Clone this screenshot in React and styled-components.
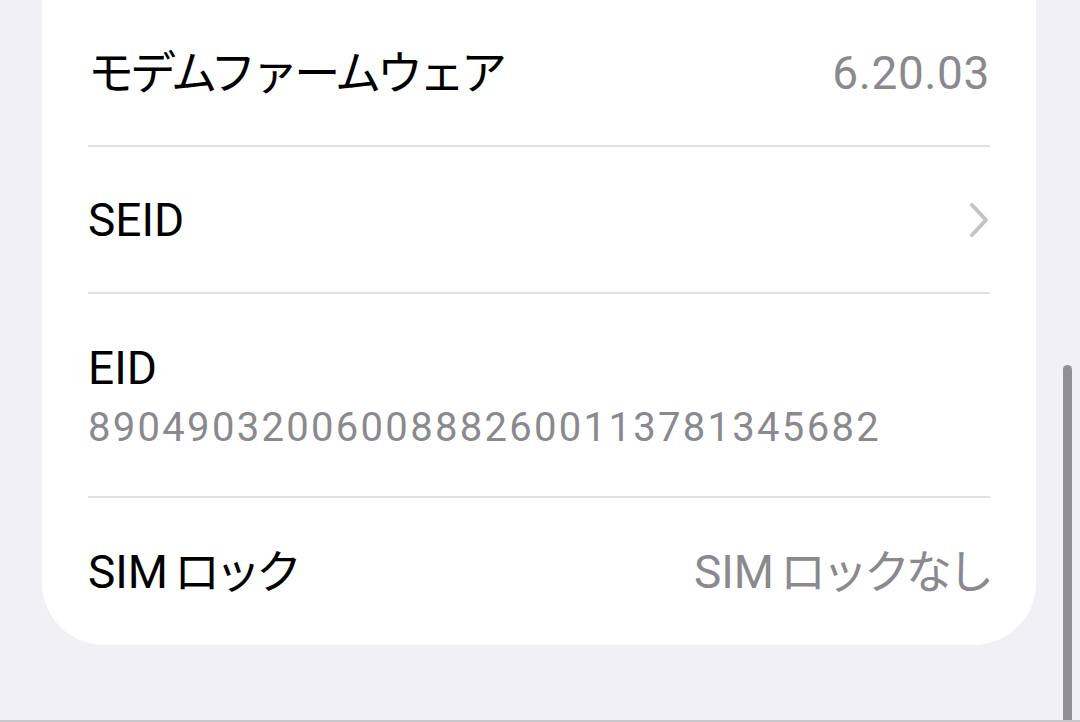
import styled, { createGlobalStyle } from 'styled-components'

const GlobalStyle = createGlobalStyle`
  html, body {
    margin: 0;
    padding: 0;
    background: #f0f0f5;
  }
  body {
    font-family: Roboto, "Noto Sans CJK JP", sans-serif;
    -webkit-font-smoothing: antialiased;
  }
`

const Screen = styled.div`
  position: relative;
  box-sizing: border-box;
  height: 722px;
  overflow: hidden;
  padding: 0 44px 0 42px;
  background: #f0f0f5;
  border-bottom: 2px solid #c8c8cb;
`

const Card = styled.div`
  background: #fff;
  border-radius: 0 0 62px 62px;
  padding: 0 46px;
`

const Row = styled.div`
  display: flex;
  align-items: center;
  justify-content: space-between;
  height: ${(p) => p.$h}px;
`

const Stack = styled.div`
  display: flex;
  flex-direction: column;
  justify-content: flex-start;
  height: ${(p) => p.$h}px;
  padding-top: 47px;
  box-sizing: border-box;
`

const Label = styled.span`
  font-size: 46px;
  line-height: 54px;
  color: #000;
  white-space: nowrap;
`

const Value = styled.span`
  font-size: 46px;
  line-height: 54px;
  color: #8a8a8e;
  white-space: nowrap;
  letter-spacing: ${(p) => (p.$digits ? '0.6px' : '0')};
`

const Kana = styled.span`
  letter-spacing: ${(p) => (p.$tight ? '-5px' : '-4px')};
  margin-left: ${(p) => (p.$gap ? '6px' : '0')};
`

const Number = styled.div`
  margin-top: 11px;
  font-size: 40px;
  line-height: 44px;
  letter-spacing: 2.3px;
  color: #8a8a8e;
  white-space: nowrap;
`

const Divider = styled.div`
  height: 2px;
  background: #e2e2e5;
`

const Scrollbar = styled.div`
  position: absolute;
  right: 8px;
  top: 365px;
  bottom: 0;
  width: 9px;
  border-radius: 5px 5px 0 0;
  background: #8f8f94;
`

const Chevron = () => (
  <svg width="22" height="36" viewBox="0 0 22 36" fill="none">
    <path
      d="M4 3 L18 18 L4 33"
      stroke="#c4c4c7"
      strokeWidth="4"
      strokeLinecap="round"
      strokeLinejoin="round"
    />
  </svg>
)

export default function App() {
  return (
    <Screen>
      <GlobalStyle />
      <Card>
        <Row $h={145}>
          <Label>
            <Kana>モデムファームウェア</Kana>
          </Label>
          <Value $digits>6.20.03</Value>
        </Row>
        <Divider />
        <Row $h={145}>
          <Label>SEID</Label>
          <Chevron />
        </Row>
        <Divider />
        <Stack $h={202}>
          <Label>EID</Label>
          <Number>89049032006008882600113781345682</Number>
        </Stack>
        <Divider />
        <Row $h={147}>
          <Label>
            SIM<Kana $gap $tight>ロック</Kana>
          </Label>
          <Value>
            SIM<Kana $gap>ロックなし</Kana>
          </Value>
        </Row>
      </Card>
      <Scrollbar />
    </Screen>
  )
}
